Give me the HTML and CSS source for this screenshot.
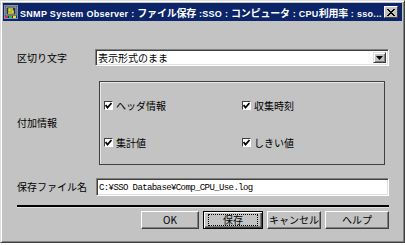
FILE: index.html
```html
<!DOCTYPE html>
<html lang="ja">
<head>
    <meta charset="UTF-8">
    <title>ファイル保存</title>
    <link rel="stylesheet" href="styles.css">
</head>
<body>

    <div class="window">
        <!-- Title bar -->
        <div class="titlebar">
            <svg class="app-icon" width="14" height="14" viewBox="0 0 14 14">
                <rect x="0.5" y="0.5" width="13" height="13" fill="#1a2c8a" stroke="#8090c0"/>
                <rect x="2" y="2" width="10" height="8" fill="#203070" stroke="#c8c860"/>
                <path d="M9 4 H5 V6 H9 V8 H4" fill="none" stroke="#f0e020" stroke-width="1.5"/>
                <rect x="1" y="11" width="3" height="2" fill="#e03030"/>
                <rect x="5" y="11" width="3" height="2" fill="#30c040"/>
                <rect x="9" y="11" width="3" height="2" fill="#f0e020"/>
            </svg>
            <span class="title">SNMP System Observer : <span class="jp">ファイル保存</span> :SSO : <span class="jp">コンピュータ</span> : CPU<span class="jp">利用率</span> : sso...</span>
            <span class="close-btn">
                <svg width="8" height="7" viewBox="0 0 8 7">
                    <path d="M0 0 L7 7 M1 0 L8 7 M7 0 L0 7 M8 0 L1 7" stroke="#000" stroke-width="1"/>
                </svg>
            </span>
        </div>

        <div class="dialog">
            <!-- Delimiter -->
            <div class="row">
                <span class="field-label">区切り文字</span>
                <div class="select">
                    <span class="select-value">表示形式のまま</span>
                    <span class="select-arrow">
                        <svg width="7" height="4" viewBox="0 0 7 4"><path d="M0 0 H7 L3.5 4 Z" fill="#000"/></svg>
                    </span>
                </div>
            </div>

            <!-- Additional info -->
            <div class="row row-extra">
                <span class="field-label">付加情報</span>
                <div class="groupbox">
                    <div class="check"><span class="box"><svg width="7" height="7" viewBox="0 0 7 7"><path d="M0.5 3 L2.5 5.5 L6.5 1" fill="none" stroke="#000" stroke-width="1.8"/></svg></span>ヘッダ情報</div>
                    <div class="check"><span class="box"><svg width="7" height="7" viewBox="0 0 7 7"><path d="M0.5 3 L2.5 5.5 L6.5 1" fill="none" stroke="#000" stroke-width="1.8"/></svg></span>収集時刻</div>
                    <div class="check"><span class="box"><svg width="7" height="7" viewBox="0 0 7 7"><path d="M0.5 3 L2.5 5.5 L6.5 1" fill="none" stroke="#000" stroke-width="1.8"/></svg></span>集計値</div>
                    <div class="check"><span class="box"><svg width="7" height="7" viewBox="0 0 7 7"><path d="M0.5 3 L2.5 5.5 L6.5 1" fill="none" stroke="#000" stroke-width="1.8"/></svg></span>しきい値</div>
                </div>
            </div>

            <!-- File name -->
            <div class="row row-file">
                <span class="field-label">保存ファイル名</span>
                <div class="textbox">C:¥SSO Database¥Comp_CPU_Use.log</div>
            </div>

            <div class="separator"></div>

            <!-- Buttons -->
            <div class="buttons">
                <div class="btn btn-ok">OK</div>
                <div class="btn btn-save"><span class="focus">保存</span></div>
                <div class="btn btn-cancel">キャンセル</div>
                <div class="btn btn-help">ヘルプ</div>
            </div>
        </div>
    </div>

</body>
</html>
```

FILE: styles.css
```css
body {
    margin: 0;
    background-color: #ffffff;
    font-family: "Noto Sans CJK JP", "Liberation Sans", sans-serif;
    font-size: 10px;
    color: #000000;
}
.window {
    width: 405px;
    height: 243px;
    box-sizing: border-box;
    background-color: #c3c3c3;
    border: 1px solid;
    border-color: #dfdfdf #404040 #404040 #dfdfdf;
    box-shadow: inset 1px 1px 0 #ffffff, inset -1px -1px 0 #808080;
    padding: 2px;
}
.titlebar {
    height: 18px;
    display: flex;
    align-items: center;
    background-color: #0c2468;
    padding: 0 4px 0 1px;
}
.app-icon {
    flex: none;
}
.title {
    flex: 1;
    margin-left: 2px;
    color: #ffffff;
    font-family: "Liberation Sans", "Noto Sans CJK JP", sans-serif;
    font-weight: bold;
    font-size: 9px;
    letter-spacing: 0.3px;
    white-space: nowrap;
    overflow: hidden;
}
.title .jp {
    font-family: "Noto Sans CJK JP", sans-serif;
    font-size: 10px;
    font-weight: bold;
    letter-spacing: -0.2px;
}
.close-btn {
    flex: none;
    width: 14px;
    height: 12px;
    box-sizing: border-box;
    display: flex;
    justify-content: center;
    align-items: center;
    background-color: #c3c3c3;
    border: 1px solid;
    border-color: #ffffff #404040 #404040 #ffffff;
}
.dialog {
    display: flex;
    flex-direction: column;
    padding: 28px 13px 0 14px;
}
.row {
    display: flex;
    align-items: center;
}
.field-label {
    width: 78px;
    flex: none;
    line-height: 12px;
}
.select {
    width: 294px;
    height: 17px;
    box-sizing: border-box;
    display: flex;
    align-items: center;
    background-color: #ffffff;
    border: 1px solid;
    border-color: #808080 #ffffff #ffffff #808080;
    box-shadow: inset 1px 1px 0 #404040, inset -1px -1px 0 #dfdfdf;
    padding: 2px;
}
.select-value {
    flex: 1;
    line-height: 12px;
}
.select-arrow {
    width: 13px;
    height: 11px;
    box-sizing: border-box;
    display: flex;
    justify-content: center;
    align-items: center;
    background-color: #c3c3c3;
    border: 1px solid;
    border-color: #dfdfdf #404040 #404040 #dfdfdf;
    box-shadow: inset 1px 1px 0 #ffffff, inset -1px -1px 0 #808080;
}
.row-extra {
    margin-top: 15px;
}
.groupbox {
    margin-left: 4px;
    width: 286px;
    height: 84px;
    box-sizing: border-box;
    border: 1px solid #404040;
    box-shadow: inset 1px 1px 0 #e8e8e8;
    display: grid;
    grid-template-columns: 138px 1fr;
    grid-auto-rows: 9px;
    row-gap: 28px;
    align-content: start;
    padding: 19px 0 0 4px;
}
.check {
    display: flex;
    align-items: center;
    gap: 3px;
    line-height: 9px;
}
.box {
    width: 9px;
    height: 9px;
    box-sizing: border-box;
    display: flex;
    justify-content: center;
    align-items: center;
    background-color: #ffffff;
    border: 1px solid;
    border-color: #404040 #ffffff #ffffff #404040;
}
.row-file {
    margin-top: 13px;
}
.textbox {
    margin-left: 1px;
    width: 293px;
    height: 18px;
    box-sizing: border-box;
    background-color: #ffffff;
    border: 1px solid;
    border-color: #808080 #ffffff #ffffff #808080;
    box-shadow: inset 1px 1px 0 #404040, inset -1px -1px 0 #dfdfdf;
    padding: 3px 2px 0;
    font-family: "Liberation Mono", "Noto Sans CJK JP", monospace;
    font-size: 9px;
    letter-spacing: -0.6px;
    line-height: 12px;
    white-space: nowrap;
}
.separator {
    margin-top: 9px;
    height: 2px;
    background-color: #000000;
    box-shadow: 0 1px 0 #e0e0e0;
}
.buttons {
    margin-top: 4px;
    display: flex;
    justify-content: flex-end;
    gap: 4px;
}
.btn {
    height: 18px;
    box-sizing: border-box;
    display: flex;
    justify-content: center;
    align-items: center;
    background-color: #c3c3c3;
    border: 1px solid;
    border-color: #ffffff #404040 #404040 #ffffff;
    box-shadow: inset -1px -1px 0 #808080;
    line-height: 12px;
}
.btn-ok {
    width: 58px;
}
.btn-save {
    width: 60px;
    border: 1px solid #000000;
    box-shadow: inset 1px 1px 0 #ffffff, inset -1px -1px 0 #404040, inset -2px -2px 0 #808080;
}
.btn-save .focus {
    width: 48px;
    height: 10px;
    display: flex;
    justify-content: center;
    align-items: center;
    border: 1px dotted #000000;
}
.btn-cancel {
    width: 54px;
}
.btn-help {
    width: 64px;
}
```
